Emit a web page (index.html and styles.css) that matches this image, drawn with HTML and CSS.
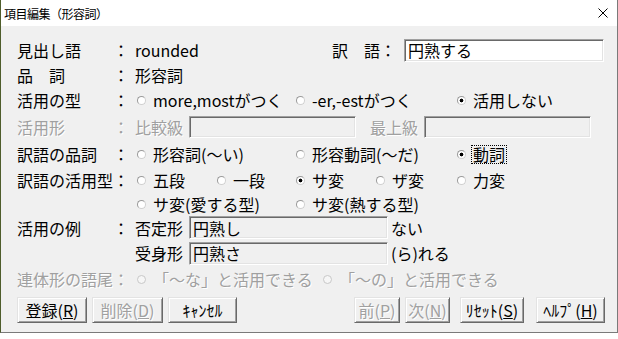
FILE: index.html
```html
<!DOCTYPE html>
<html lang="ja">
<head>
    <meta charset="UTF-8">
    <title>項目編集（形容詞）</title>
    <link rel="stylesheet" href="styles.css">
</head>
<body>
    <div class="window">
        <div class="titlebar">
            <span class="title">項目編集（形容詞）</span>
            <svg class="close" width="10" height="10" viewBox="0 0 10 10">
                <path d="M0.5 0.5L9.5 9.5M9.5 0.5L0.5 9.5" stroke="#000" stroke-width="1"/>
            </svg>
        </div>

        <div class="content">
            <div class="row r1">
                <span class="label">見出し語</span><span class="colon">：</span>
                <span class="value">rounded</span>
                <span class="trans-label">訳　語：</span>
                <input class="field field-trans" value="円熟する">
            </div>

            <div class="row r2">
                <span class="label">品　詞</span><span class="colon">：</span>
                <span class="value">形容詞</span>
            </div>

            <div class="row r3">
                <span class="label">活用の型</span><span class="colon">：</span>
                <div class="options">
                    <label class="radio span2"><span class="mark"></span>more,mostがつく</label>
                    <label class="radio span2"><span class="mark"></span>-er,-estがつく</label>
                    <label class="radio"><span class="mark on"></span>活用しない</label>
                </div>
            </div>

            <div class="row r4 disabled">
                <span class="label">活用形</span><span class="colon">：</span>
                <span class="value">比較級</span>
                <input class="field field-comp" disabled>
                <span class="sub-label">最上級</span>
                <input class="field field-comp" disabled>
            </div>

            <div class="row r5">
                <span class="label">訳語の品詞</span><span class="colon">：</span>
                <div class="options">
                    <label class="radio span2"><span class="mark"></span>形容詞(〜い)</label>
                    <label class="radio span2"><span class="mark"></span>形容動詞(〜だ)</label>
                    <label class="radio"><span class="mark on"></span><span class="focus">動詞</span></label>
                </div>
            </div>

            <div class="row r6">
                <span class="label label-long">訳語の活用型</span><span class="colon">：</span>
                <div class="options">
                    <label class="radio"><span class="mark"></span>五段</label>
                    <label class="radio"><span class="mark"></span>一段</label>
                    <label class="radio"><span class="mark on"></span>サ変</label>
                    <label class="radio"><span class="mark"></span>ザ変</label>
                    <label class="radio"><span class="mark"></span>力変</label>
                </div>
            </div>

            <div class="row r7">
                <span class="label"></span><span class="colon"></span>
                <div class="options">
                    <label class="radio span2"><span class="mark"></span>サ変(愛する型)</label>
                    <label class="radio span2"><span class="mark"></span>サ変(熱する型)</label>
                </div>
            </div>

            <div class="row r8">
                <span class="label">活用の例</span><span class="colon">：</span>
                <span class="value">否定形</span>
                <input class="field field-example" value="円熟し" readonly>
                <span class="suffix">ない</span>
            </div>

            <div class="row r9">
                <span class="label"></span><span class="colon"></span>
                <span class="value">受身形</span>
                <input class="field field-example" value="円熟さ" readonly>
                <span class="suffix">(ら)れる</span>
            </div>

            <div class="row r10 disabled">
                <span class="label label-long">連体形の語尾</span><span class="colon">：</span>
                <div class="options-wide">
                    <label class="radio first"><span class="mark"></span>「〜な」と活用できる</label>
                    <label class="radio"><span class="mark"></span>「〜の」と活用できる</label>
                </div>
            </div>

            <div class="buttons">
                <div class="btn-group">
                    <button class="btn w70">登録(<u>R</u>)</button>
                    <button class="btn w71 off" disabled>削除(<u>D</u>)</button>
                    <button class="btn w69">ｷｬﾝｾﾙ</button>
                </div>
                <div class="btn-group right">
                    <button class="btn w46 off" disabled>前(<u>P</u>)</button>
                    <button class="btn w45 off" disabled>次(<u>N</u>)</button>
                    <button class="btn w64 gap-l">ﾘｾｯﾄ(<u>S</u>)</button>
                    <button class="btn w69 gap-xl">ﾍﾙﾌﾟ(<u>H</u>)</button>
                </div>
            </div>
        </div>
    </div>
</body>
</html>
```

FILE: styles.css
```css
body {
    margin: 0;
    background: #fff;
    font-family: "Noto Sans CJK JP", sans-serif;
    color: #000;
}

.window {
    width: 618px;
    height: 333px;
    box-sizing: border-box;
    border: 1px solid #7a7a7a;
    border-top: none;
    border-left-color: #4f5d2b;
    background: #f0f0f0;
}

.titlebar {
    height: 26px;
    background: #fff;
    display: flex;
    align-items: center;
    justify-content: space-between;
    padding: 0 9px 0 3px;
}

.title {
    font-size: 12px;
    letter-spacing: -0.5px;
}

.content {
    padding: 11px 12px 0 16px;
    font-size: 16px;
}

.row {
    display: flex;
    align-items: center;
    height: 26px;
    white-space: nowrap;
}

/* row heights follow the dialog's uneven spacing */
.r2 { height: 24px; }
.r4 { height: 28px; }
.r7 { height: 22px; }
.r8 { height: 25px; }

.label {
    width: 96px;
}

.colon {
    width: 16px;
    text-align: center;
}

.value {
    margin-left: 6px;
}

.trans-label {
    margin-left: auto;
    margin-right: 8px;
}

.sub-label {
    margin-left: 14px;
}

.suffix {
    margin-left: 3px;
}

.disabled {
    color: #a0a0a0;
    text-shadow: 1px 1px #fff;
}

/* sunken edit boxes */
.field {
    box-sizing: border-box;
    height: 23px;
    margin: 0;
    padding: 0 3px;
    font: inherit;
    font-size: 16px;
    color: #000;
    background: #fff;
    border: 1px solid;
    border-color: #a0a0a0 #fff #fff #a0a0a0;
    box-shadow: inset 1px 1px #696969, inset -1px -1px #e3e3e3;
    outline: none;
}

.field-trans {
    width: 200px;
    margin-right: 1px;
}

.field-comp {
    width: 167px;
    height: 22px;
    margin-left: 6px;
    background: #f0f0f0;
}

.field-example {
    width: 199px;
    margin-left: 6px;
    background: #f0f0f0;
}

/* radio buttons */
.options {
    margin-left: 8px;
    display: grid;
    grid-template-columns: 80px 79px 80px 81px auto;
}

.options-wide {
    margin-left: 8px;
    display: flex;
}

.options-wide .first {
    width: 186px;
}

.radio {
    display: flex;
    align-items: center;
}

.span2 {
    grid-column: span 2;
}

.mark {
    width: 9px;
    height: 9px;
    box-sizing: border-box;
    border-radius: 50%;
    border: 1px solid #9a9a9a;
    border-bottom-color: #d0d0d0;
    border-right-color: #d0d0d0;
    background: #fff;
    margin-right: 7px;
    flex-shrink: 0;
}

.mark.on {
    background: radial-gradient(circle, #000 0 1.6px, #fff 2.2px);
}

.disabled .mark {
    border-color: #c8c8c8;
    background: #f6f6f6;
}

.focus {
    display: inline-block;
    line-height: 17px;
    padding: 0 1px;
    margin-left: -1px;
    outline: 1px dotted #000;
}

/* bottom buttons */
.buttons {
    display: flex;
    margin-top: 5px;
}

.btn-group {
    display: flex;
    gap: 5px;
}

.btn-group.right {
    margin-left: auto;
}

.btn {
    height: 26px;
    box-sizing: border-box;
    padding: 0;
    font: inherit;
    font-size: 16px;
    color: #000;
    background: #f0f0f0;
    border: 1px solid;
    border-color: #e3e3e3 #696969 #696969 #e3e3e3;
    box-shadow: inset 1px 1px #fff, inset -1px -1px #a0a0a0;
}

.btn.off {
    color: #a0a0a0;
    text-shadow: 1px 1px #fff;
}

.w45 { width: 45px; }
.w46 { width: 46px; }
.w64 { width: 64px; }
.w69 { width: 69px; }
.w70 { width: 70px; }
.w71 { width: 71px; }

.gap-l { margin-left: 5px; }
.gap-xl { margin-left: 7px; }
```
